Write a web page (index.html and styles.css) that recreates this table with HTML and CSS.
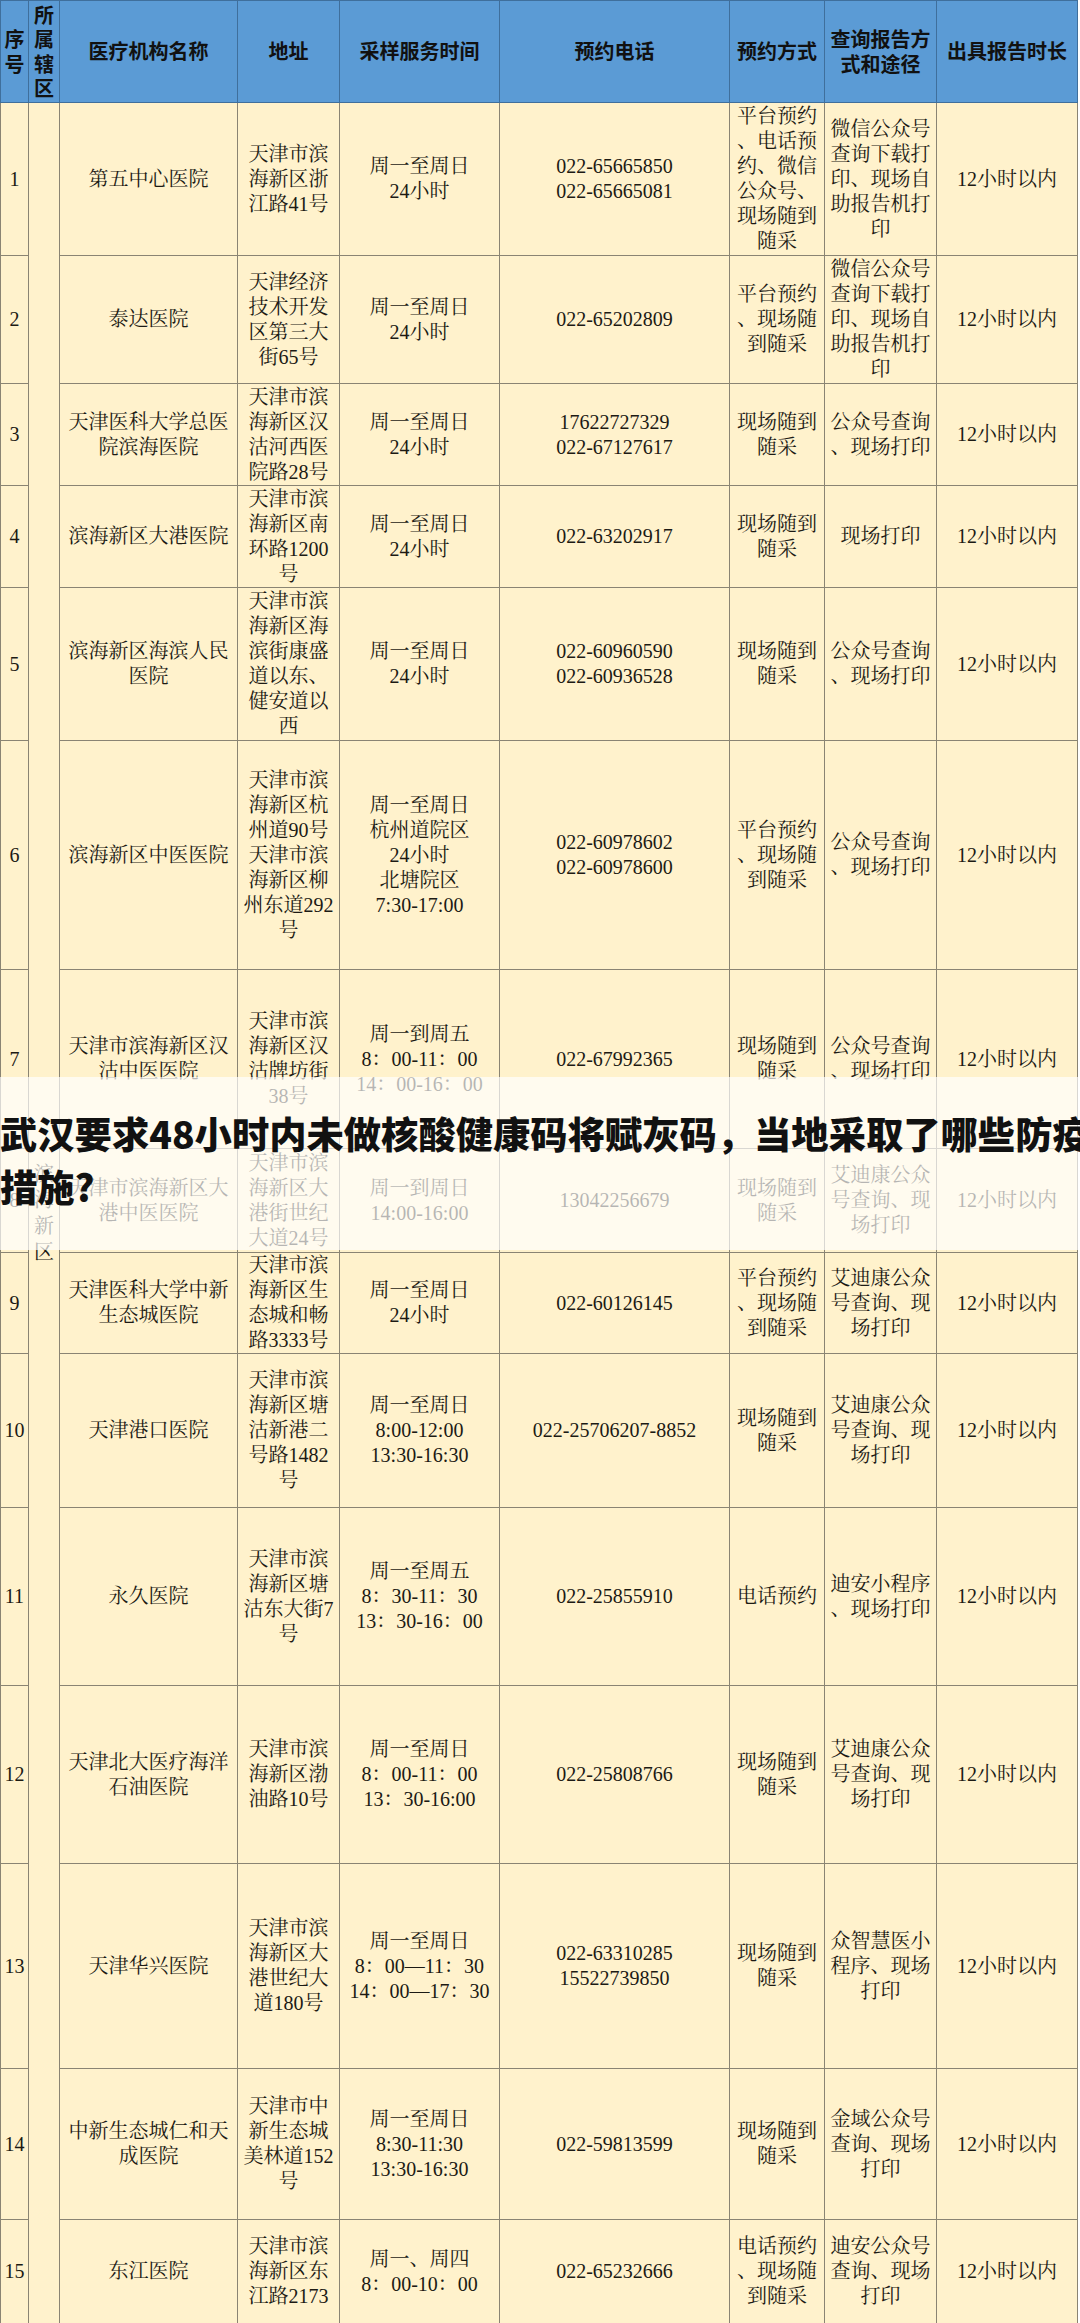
FILE: index.html
```html
<!DOCTYPE html>
<html lang="zh-CN">
<head>
<meta charset="utf-8">
<title>核酸采样机构</title>
<link rel="stylesheet" href="styles.css">
</head>
<body>
<div class="page">
<table class="sheet">
<colgroup>
<col class="c-no"><col class="c-area"><col class="c-name"><col class="c-addr"><col class="c-time"><col class="c-tel"><col class="c-way"><col class="c-query"><col class="c-dur">
</colgroup>
<thead>
<tr class="head">
<th>序<br>号</th><th>所<br>属<br>辖<br>区</th><th>医疗机构名称</th><th>地址</th><th>采样服务时间</th><th>预约电话</th><th>预约方式</th><th>查询报告方<br>式和途径</th><th>出具报告时长</th>
</tr>
</thead>
<tbody>
<tr class="h153">
<td>1</td><td rowspan="15" class="area">滨<br>海<br>新<br>区</td><td>第五中心医院</td><td>天津市滨<br>海新区浙<br>江路41号</td><td>周一至周日<br>24小时</td><td>022-65665850<br>022-65665081</td><td>平台预约<br>、电话预<br>约、微信<br>公众号、<br>现场随到<br>随采</td><td>微信公众号<br>查询下载打<br>印、现场自<br>助报告机打<br>印</td><td>12小时以内</td>
</tr>
<tr class="h128">
<td>2</td><td>泰达医院</td><td>天津经济<br>技术开发<br>区第三大<br>街65号</td><td>周一至周日<br>24小时</td><td>022-65202809</td><td>平台预约<br>、现场随<br>到随采</td><td>微信公众号<br>查询下载打<br>印、现场自<br>助报告机打<br>印</td><td>12小时以内</td>
</tr>
<tr class="h102">
<td>3</td><td>天津医科大学总医<br>院滨海医院</td><td>天津市滨<br>海新区汉<br>沽河西医<br>院路28号</td><td>周一至周日<br>24小时</td><td>17622727329<br>022-67127617</td><td>现场随到<br>随采</td><td>公众号查询<br>、现场打印</td><td>12小时以内</td>
</tr>
<tr class="h102">
<td>4</td><td>滨海新区大港医院</td><td>天津市滨<br>海新区南<br>环路1200<br>号</td><td>周一至周日<br>24小时</td><td>022-63202917</td><td>现场随到<br>随采</td><td>现场打印</td><td>12小时以内</td>
</tr>
<tr class="h153">
<td>5</td><td>滨海新区海滨人民<br>医院</td><td>天津市滨<br>海新区海<br>滨街康盛<br>道以东、<br>健安道以<br>西</td><td>周一至周日<br>24小时</td><td>022-60960590<br>022-60936528</td><td>现场随到<br>随采</td><td>公众号查询<br>、现场打印</td><td>12小时以内</td>
</tr>
<tr class="h229">
<td>6</td><td>滨海新区中医医院</td><td>天津市滨<br>海新区杭<br>州道90号<br>天津市滨<br>海新区柳<br>州东道292<br>号</td><td>周一至周日<br>杭州道院区<br>24小时<br>北塘院区<br>7:30-17:00</td><td>022-60978602<br>022-60978600</td><td>平台预约<br>、现场随<br>到随采</td><td>公众号查询<br>、现场打印</td><td>12小时以内</td>
</tr>
<tr class="h179">
<td>7</td><td>天津市滨海新区汉<br>沽中医医院</td><td>天津市滨<br>海新区汉<br>沽牌坊街<br>38号</td><td>周一到周五<br>8：00-11：00<br>14：00-16：00</td><td>022-67992365</td><td>现场随到<br>随采</td><td>公众号查询<br>、现场打印</td><td>12小时以内</td>
</tr>
<tr class="h104">
<td>8</td><td>天津市滨海新区大<br>港中医医院</td><td>天津市滨<br>海新区大<br>港街世纪<br>大道24号</td><td>周一到周日<br>14:00-16:00</td><td>13042256679</td><td>现场随到<br>随采</td><td>艾迪康公众<br>号查询、现<br>场打印</td><td>12小时以内</td>
</tr>
<tr class="h101">
<td>9</td><td>天津医科大学中新<br>生态城医院</td><td>天津市滨<br>海新区生<br>态城和畅<br>路3333号</td><td>周一至周日<br>24小时</td><td>022-60126145</td><td>平台预约<br>、现场随<br>到随采</td><td>艾迪康公众<br>号查询、现<br>场打印</td><td>12小时以内</td>
</tr>
<tr class="h154">
<td>10</td><td>天津港口医院</td><td>天津市滨<br>海新区塘<br>沽新港二<br>号路1482<br>号</td><td>周一至周日<br>8:00-12:00<br>13:30-16:30</td><td>022-25706207-8852</td><td>现场随到<br>随采</td><td>艾迪康公众<br>号查询、现<br>场打印</td><td>12小时以内</td>
</tr>
<tr class="h178">
<td>11</td><td>永久医院</td><td>天津市滨<br>海新区塘<br>沽东大街7<br>号</td><td>周一至周五<br>8：30-11：30<br>13：30-16：00</td><td>022-25855910</td><td>电话预约</td><td>迪安小程序<br>、现场打印</td><td>12小时以内</td>
</tr>
<tr class="h178">
<td>12</td><td>天津北大医疗海洋<br>石油医院</td><td>天津市滨<br>海新区渤<br>油路10号</td><td>周一至周日<br>8：00-11：00<br>13：30-16:00</td><td>022-25808766</td><td>现场随到<br>随采</td><td>艾迪康公众<br>号查询、现<br>场打印</td><td>12小时以内</td>
</tr>
<tr class="h205">
<td>13</td><td>天津华兴医院</td><td>天津市滨<br>海新区大<br>港世纪大<br>道180号</td><td>周一至周日<br>8：00—11：30<br>14：00—17：30</td><td>022-63310285<br>15522739850</td><td>现场随到<br>随采</td><td>众智慧医小<br>程序、现场<br>打印</td><td>12小时以内</td>
</tr>
<tr class="h151">
<td>14</td><td>中新生态城仁和天<br>成医院</td><td>天津市中<br>新生态城<br>美林道152<br>号</td><td>周一至周日<br>8:30-11:30<br>13:30-16:30</td><td>022-59813599</td><td>现场随到<br>随采</td><td>金域公众号<br>查询、现场<br>打印</td><td>12小时以内</td>
</tr>
<tr class="h104">
<td>15</td><td>东江医院</td><td>天津市滨<br>海新区东<br>江路2173</td><td>周一、周四<br>8：00-10：00</td><td>022-65232666</td><td>电话预约<br>、现场随<br>到随采</td><td>迪安公众号<br>查询、现场<br>打印</td><td>12小时以内</td>
</tr>
</tbody>
</table>

<div class="band">
<h1 class="title">武汉要求48小时内未做核酸健康码将赋灰码，当地采取了哪些防疫<br>措施?</h1>
</div>
</div>
</body>
</html>
```

FILE: styles.css
```css
html, body {
  margin: 0;
  padding: 0;
  background: #ffffff;
}

body {
  width: 1080px;
  overflow-x: hidden;
}

.page {
  position: relative;
  width: 1080px;
  height: 2323px;
  overflow: hidden;
}

.sheet {
  border-collapse: collapse;
  table-layout: fixed;
  width: 1077px;
  font-family: "Liberation Serif", "Noto Serif CJK SC", "Noto Sans CJK SC", serif;
  font-size: 20px;
  line-height: 25px;
  color: #1c1a14;
}

.c-no { width: 28px; }
.c-area { width: 31px; }
.c-name { width: 178px; }
.c-addr { width: 102px; }
.c-time { width: 160px; }
.c-tel { width: 230px; }
.c-way { width: 95px; }
.c-query { width: 112px; }
.c-dur { width: 141px; }

.sheet th,
.sheet td {
  border: 1px solid #8a8473;
  padding: 0;
  text-align: center;
  vertical-align: middle;
  white-space: nowrap;
  overflow: visible;
}

.head {
  height: 102px;
}

.sheet th {
  background: #5b9bd5;
  font-family: "Noto Sans CJK SC", sans-serif;
  font-weight: 700;
  font-size: 20px;
  line-height: 24.5px;
  color: #111111;
  border-color: #3f6f9c;
}

.sheet td {
  background: #fff2cc;
}

.sheet td.area {
  line-height: 26px;
}

.h101 { height: 101px; }
.h102 { height: 102px; }
.h104 { height: 104px; }
.h128 { height: 128px; }
.h151 { height: 151px; }
.h153 { height: 153px; }
.h154 { height: 154px; }
.h178 { height: 178px; }
.h179 { height: 179px; }
.h205 { height: 205px; }
.h229 { height: 229px; }

.band {
  position: absolute;
  left: 0;
  top: 1077px;
  width: 1080px;
  height: 173px;
  background: rgba(255, 255, 255, 0.68);
  overflow: hidden;
}

.title {
  margin: 0;
  padding: 30px 0 0 0;
  font-family: "Noto Sans CJK SC", sans-serif;
  font-weight: 900;
  font-size: 37.3px;
  line-height: 53px;
  color: #111111;
  white-space: nowrap;
  letter-spacing: 0;
}
```
